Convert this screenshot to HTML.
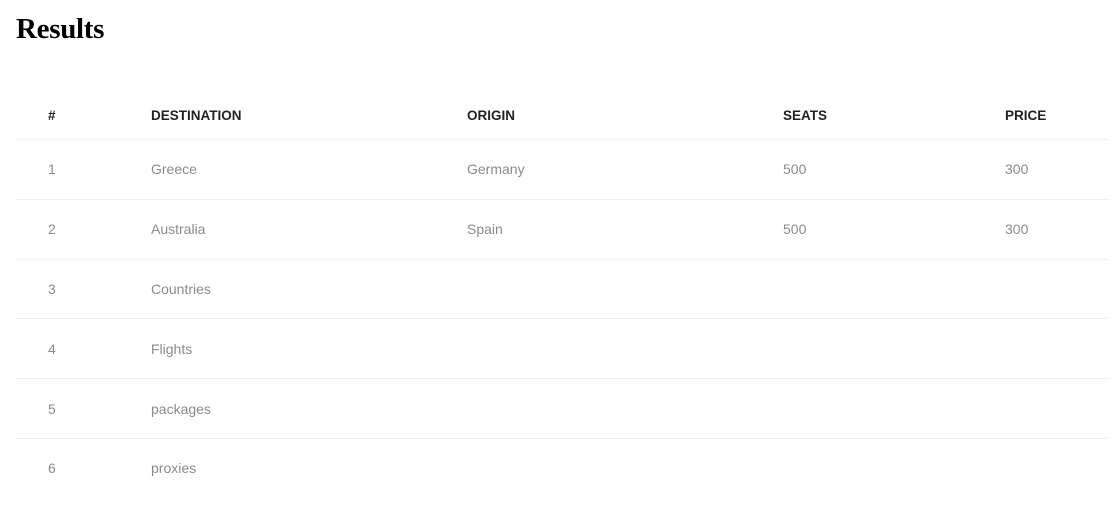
<!DOCTYPE html>
<html><head><style>
body{margin:0;background:#fff;font-family:"Liberation Sans",Arial,sans-serif;}
h1{position:absolute;left:16px;top:13px;margin:0;font-family:"Liberation Serif",serif;font-weight:bold;font-size:29px;color:#000;letter-spacing:-0.3px}
table{position:absolute;left:16px;top:91px;width:1094px;border-collapse:collapse;table-layout:fixed}
th,td{text-align:left;padding:0 0 0 32px;}
th{height:48px;font-size:13.5px;font-weight:bold;color:#222;border-bottom:1px solid #eef0f5;}
td{height:58.8px;font-size:14px;color:#8e8a88;border-bottom:1px solid #eef0f5;}
tr:last-child td{border-bottom:none}
</style></head><body>
<h1>Results</h1>
<table>
<colgroup><col style="width:103px"><col style="width:316px"><col style="width:316px"><col style="width:222px"><col></colgroup>
<tr><th>#</th><th>DESTINATION</th><th>ORIGIN</th><th>SEATS</th><th>PRICE</th></tr>
<tr><td>1</td><td>Greece</td><td>Germany</td><td>500</td><td>300</td></tr>
<tr><td>2</td><td>Australia</td><td>Spain</td><td>500</td><td>300</td></tr>
<tr><td>3</td><td>Countries</td><td></td><td></td><td></td></tr>
<tr><td>4</td><td>Flights</td><td></td><td></td><td></td></tr>
<tr><td>5</td><td>packages</td><td></td><td></td><td></td></tr>
<tr><td>6</td><td>proxies</td><td></td><td></td><td></td></tr>
</table>
</body></html>
